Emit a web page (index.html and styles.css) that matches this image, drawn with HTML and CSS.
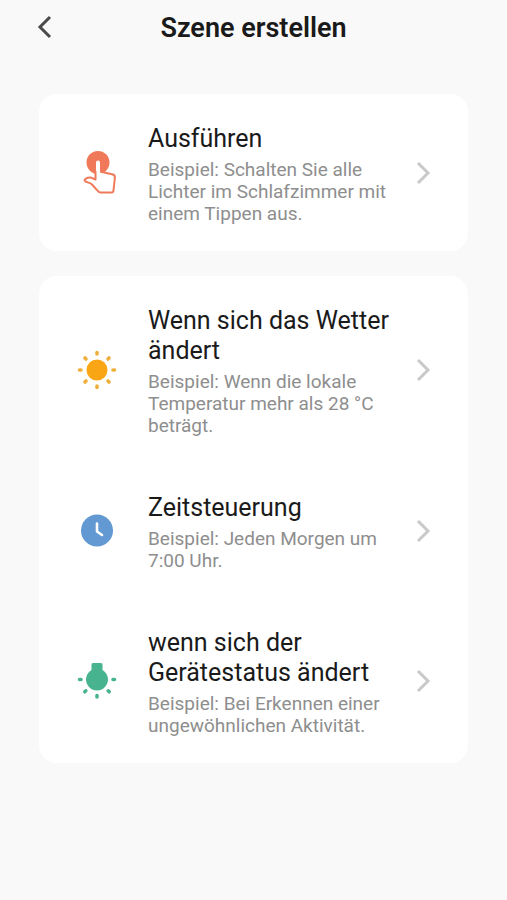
FILE: index.html
```html
<!DOCTYPE html>
<html lang="de">
<head>
<meta charset="utf-8">
<meta name="viewport" content="width=device-width, initial-scale=1">
<title>Szene erstellen</title>
<link rel="stylesheet" href="styles.css">
</head>
<body>
<header class="topbar">
  <button class="back" type="button" aria-label="Zurück">
    <svg width="16" height="26" viewBox="0 0 16 26"><path d="M13 2 3 12l10 10"/></svg>
  </button>
  <h1>Szene erstellen</h1>
</header>
<main class="cards">
  <section class="card">
    <a class="row" href="#run">
      <svg class="icon" width="44" height="44" viewBox="0 0 44 44">
        <circle cx="23" cy="11.500" r="11.500" fill="#f0795a"/>
        <path d="M21 11.500a2 2 0 0 1 4 0V21l4 0 9 2.500q2 .700 1.900 3L38.500 39.500q-.200 2-2 2H25.500q-1.500 0-2.500-1.300L17.500 34l-7-3.500q-2-1.500.200-2.700 3-2 6-1l4.300 1.700z" fill="#fff"/>
        <path d="M25 20.500 38 23.500q2 .700 1.900 3L38.500 39.500q-.200 2-2 2H25.500q-1.500 0-2.500-1.300L17.500 34q-1.500-1.700-4-2.400l-3-1.100q-2-1.300.200-2.700 3-2 6-1L20.500 28.500V20" fill="none" stroke="#f0795a" stroke-width="2" stroke-linejoin="round"/>
      </svg>
      <span class="text">
        <span class="title">Ausführen</span>
        <span class="desc">Beispiel: Schalten Sie alle Lichter im Schlafzimmer mit einem Tippen aus.</span>
      </span>
      <svg class="chevron" width="16" height="26" viewBox="0 0 16 26"><path d="m3 3 10 10L3 23"/></svg>
    </a>
  </section>
  <section class="card">
    <a class="row" href="#weather">
      <svg class="icon" width="44" height="44" viewBox="0 0 44 44">
        <circle cx="22" cy="22" r="10.500" fill="#faa614"/>
        <path d="M22 4.500v1.500M22 38v1.500M4.500 22h1.500M38 22h1.500M10 10l1 1M33 33l1 1M10 34l1-1M33 11l1-1" stroke="#eeb03c" stroke-width="3.600" stroke-linecap="round"/>
      </svg>
      <span class="text">
        <span class="title">Wenn sich das Wetter ändert</span>
        <span class="desc">Beispiel: Wenn die lokale Temperatur mehr als 28 °C beträgt.</span>
      </span>
      <svg class="chevron" width="16" height="26" viewBox="0 0 16 26"><path d="m3 3 10 10L3 23"/></svg>
    </a>
    <a class="row" href="#time">
      <svg class="icon" width="44" height="44" viewBox="0 0 44 44">
        <circle cx="22" cy="21.500" r="16" fill="#6299d2"/>
        <path d="M22 14.500v8l5 3.500" fill="none" stroke="#fff" stroke-width="2.600" stroke-linecap="round" stroke-linejoin="round"/>
      </svg>
      <span class="text">
        <span class="title">Zeitsteuerung</span>
        <span class="desc">Beispiel: Jeden Morgen um 7:00 Uhr.</span>
      </span>
      <svg class="chevron" width="16" height="26" viewBox="0 0 16 26"><path d="m3 3 10 10L3 23"/></svg>
    </a>
    <a class="row" href="#device">
      <svg class="icon" width="44" height="44" viewBox="0 0 44 44">
        <path d="M18 4h8q1.500 0 1.500 1.500V11a11 11 0 1 1-11 0V5.500Q16.500 4 18 4" fill="#47b38f"/>
        <path d="M4.500 20.500h1.500M38 20.500h1.500M9.800 32.800l1-1M34.200 32.800l-1-1M22 36.500v1.500" stroke="#47b38f" stroke-width="3.600" stroke-linecap="round"/>
      </svg>
      <span class="text">
        <span class="title">wenn sich der Gerätestatus ändert</span>
        <span class="desc">Beispiel: Bei Erkennen einer ungewöhnlichen Aktivität.</span>
      </span>
      <svg class="chevron" width="16" height="26" viewBox="0 0 16 26"><path d="m3 3 10 10L3 23"/></svg>
    </a>
  </section>
</main>
</body>
</html>
```
FILE: styles.css
```css
* { box-sizing: border-box; }

body {
  margin: 0;
  background: #f9f9f9;
  color: #1a1a1a;
  font-family: Roboto, "Liberation Sans", sans-serif;
}

.topbar {
  display: grid;
  grid-template-columns: 32px 1fr 32px;
  align-items: center;
  height: 56px;
  padding: 0 37px;
}

.topbar h1 {
  margin: 0;
  font-size: 27px;
  line-height: 56px;
  font-weight: 600;
  text-align: center;
}

.back {
  display: flex;
  padding: 0;
  border: 0;
  background: none;
  cursor: pointer;
}

.back path {
  fill: none;
  stroke: #4a4a4a;
  stroke-width: 3;
}

.cards {
  display: flex;
  flex-direction: column;
  gap: 25px;
  padding: 38px 39px;
}

.card {
  border-radius: 18px;
  background: #fff;
}

.row {
  display: grid;
  grid-template-columns: 44px 1fr 16px;
  column-gap: 16px;
  align-items: center;
  padding: 27px 37px 26px 36px;
  color: inherit;
  text-decoration: none;
}

.text {
  display: flex;
  flex-direction: column;
  gap: 5px;
  padding: 3px 0 0 13px;
}

.title {
  font-size: 25px;
  line-height: 30px;
}

.desc {
  color: #8e8e8e;
  font-size: 19px;
  line-height: 22px;
}

.chevron path {
  fill: none;
  stroke: #c9c9c9;
  stroke-width: 3;
}
```
